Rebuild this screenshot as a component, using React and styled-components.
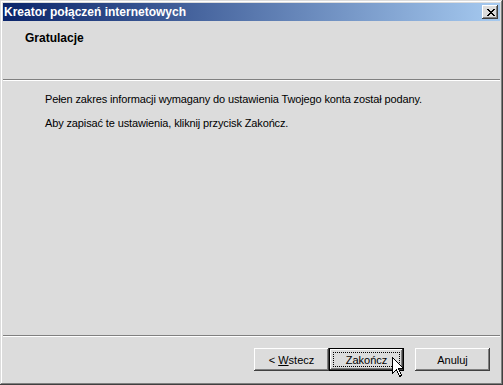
import styled, { createGlobalStyle } from "styled-components";

const GlobalStyle = createGlobalStyle`
  html, body {
    margin: 0;
    padding: 0;
    background: #dcdcdc;
  }
`;

const FACE = "#dcdcdc";

// wizard dialog
const App = () => {
  return (
    <>
      <GlobalStyle />
      <Window>
        <TitleBar>
          <TitleText>Kreator połączeń internetowych</TitleText>
          <CloseButton aria-label="Zamknij">
            <svg width="8" height="7" viewBox="0 0 8 7" shapeRendering="crispEdges">
              <path
                fill="#000"
                d="M0 0h2v1H0zM6 0h2v1H6zM1 1h2v1H1zM5 1h2v1H5zM2 2h4v1H2zM3 3h2v1H3zM2 4h4v1H2zM1 5h2v1H1zM5 5h2v1H5zM0 6h2v1H0zM6 6h2v1H6z"
              />
            </svg>
          </CloseButton>
        </TitleBar>
        <Header>
          <HeaderTitle>Gratulacje</HeaderTitle>
        </Header>
        <Separator />
        <Body>
          <Paragraph>
            Pełen zakres informacji wymagany do ustawienia Twojego konta został podany.
          </Paragraph>
          <Paragraph>Aby zapisać te ustawienia, kliknij przycisk Zakończ.</Paragraph>
        </Body>
        <Separator />
        <Footer>
          <Button>
            &lt; <u>W</u>stecz
          </Button>
          <Button $default>Zakończ</Button>
          <Button $gap>Anuluj</Button>
        </Footer>
        <Cursor width="13" height="21" viewBox="0 0 13 21" shapeRendering="crispEdges">
          <path
            d="M0.5 0.5 V16.5 L4.5 12.5 L7.5 19.5 L9.5 18.5 L6.5 11.5 H11.5 Z"
            fill="#fff"
            stroke="#000"
            strokeWidth="1"
          />
        </Cursor>
      </Window>
    </>
  );
};

const Window = styled.div`
  position: relative;
  width: 503px;
  height: 385px;
  box-sizing: border-box;
  padding: 3px;
  background: ${FACE};
  display: flex;
  flex-direction: column;
  box-shadow: inset -1px -1px #404040, inset 1px 1px ${FACE},
    inset -2px -2px #808080, inset 2px 2px #fff;
  font-family: "Liberation Sans", Arial, sans-serif;
`;

const TitleBar = styled.div`
  height: 18px;
  flex-shrink: 0;
  display: flex;
  align-items: center;
  justify-content: space-between;
  padding: 0 2px 0 1px;
  background: linear-gradient(to right, #0a246a, #a6caf0);
`;

const TitleText = styled.span`
  color: #fff;
  font-weight: bold;
  font-size: 12px;
  line-height: 14px;
  white-space: nowrap;
`;

const CloseButton = styled.div`
  width: 16px;
  height: 14px;
  box-sizing: border-box;
  background: ${FACE};
  display: flex;
  align-items: center;
  justify-content: center;
  padding-left: 1px;
  box-shadow: inset -1px -1px #404040, inset 1px 1px #fff,
    inset -2px -2px #808080, inset 2px 2px ${FACE};
`;

const Header = styled.div`
  height: 58px;
  flex-shrink: 0;
  box-sizing: border-box;
  padding: 10px 0 0 22px;
`;

const HeaderTitle = styled.div`
  font-weight: bold;
  font-size: 12px;
  line-height: 14px;
  color: #000;
`;

const Separator = styled.div`
  height: 0;
  flex-shrink: 0;
  border-top: 1px solid #808080;
  border-bottom: 1px solid #fff;
`;

const Body = styled.div`
  flex: 1;
  padding: 12px 0 0 42px;
  display: flex;
  flex-direction: column;
  gap: 11px;
`;

const Paragraph = styled.p`
  margin: 0;
  font-size: 11px;
  line-height: 13px;
  letter-spacing: -0.13px;
  color: #000;
  white-space: nowrap;
`;

const Footer = styled.div`
  height: 45px;
  flex-shrink: 0;
  box-sizing: border-box;
  display: flex;
  justify-content: flex-end;
  align-items: flex-start;
  padding: 11px 10px 0 0;
`;

const Button = styled.div`
  position: relative;
  width: 75px;
  height: 23px;
  box-sizing: border-box;
  margin-left: ${(p) => (p.$gap ? "11px" : "0")};
  background: ${FACE};
  display: flex;
  align-items: center;
  justify-content: center;
  font-size: 11px;
  color: #000;
  white-space: pre;
  border: ${(p) => (p.$default ? "1px solid #000" : "none")};
  box-shadow: inset -1px -1px #404040, inset 1px 1px #fff,
    inset -2px -2px #808080, inset 2px 2px ${FACE};

  u {
    text-decoration: underline;
    text-underline-offset: 1px;
  }

  &::after {
    content: "";
    display: ${(p) => (p.$default ? "block" : "none")};
    position: absolute;
    inset: 3px;
    border: 1px dotted #000;
  }
`;

const Cursor = styled.svg`
  position: absolute;
  left: 392px;
  top: 357px;
`;

export default App;
